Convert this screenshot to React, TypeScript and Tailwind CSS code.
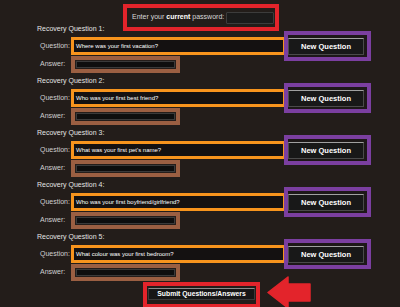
const questions = [
  "Where was your first vacation?",
  "Who was your first best friend?",
  "What was your first pet's name?",
  "Who was your first boyfriend/girlfriend?",
  "What colour was your first bedroom?",
];

function QuestionBlock({ n, text }: { n: number; text: string }) {
  return (
    <div className="flex flex-col">
      <div className="h-[12px] leading-[12px] text-[#e4e4e4]">Recovery Question {n}:</div>
      <div className="mt-[2px] flex h-[18px] items-center">
        <span className="w-[34px] pl-[3px] text-[#cfcfcf]">Question:</span>
        <div className="flex h-[18px] w-[215px] items-center border-[3px] border-[#f7941d] bg-[#141111] pl-[2px] text-[6px] text-white">
          {text}
        </div>
        <div className="relative z-10 -my-[6px] -ml-[2px] flex h-[30px] w-[87px] items-start border-4 border-[#7b3fa0] bg-[#1d1818] pt-[3px]">
          <div className="flex h-[17px] w-[76px] items-center justify-center border border-[#4a4a4a] border-t-[#a0a0a0] bg-[#181818] text-[7.5px] font-bold text-white">
            New Question
          </div>
        </div>
      </div>
      <div className="mt-[1px] flex h-[17px] items-center">
        <span className="w-[34px] pl-[3px] text-[#cfcfcf]">Answer:</span>
        <div className="h-[17px] w-[109px] border-4 border-[#9b5f42] bg-[#241d1a] p-[1px]">
          <div className="h-full w-full border border-[#3a3a3a] bg-[#0e0e0e]" />
        </div>
      </div>
      <div className="h-[2px]" />
    </div>
  );
}

export default function App() {
  return (
    <div className="h-[307px] w-[400px] overflow-hidden bg-[#231d1a] font-['Liberation_Sans',Arial,sans-serif] text-[7px]">
      <div className="flex justify-center pl-[2px] pt-[4px]">
        <div className="flex h-[27px] w-[156px] items-center border-4 border-[#e3242b] pl-[5px] pr-[1px] text-[#d8d8d8]">
          <span>
            Enter your <b className="text-white">current</b> password:
          </span>
          <div className="ml-auto h-[12px] w-[48px] rounded-[1px] border border-[#3c3c3c] bg-[#1b1b1b]" />
        </div>
      </div>
      <div className="-mt-[8px] pl-[37px]">
        {questions.map((q, i) => (
          <QuestionBlock key={i} n={i + 1} text={q} />
        ))}
      </div>
      <div className="-mt-[1px] flex justify-center pl-[3px]">
        <div className="relative">
          <div className="h-[26px] w-[117px] border-4 border-[#e3242b] px-[1px] pt-[2px]">
            <div className="flex h-[12px] items-center justify-center border border-[#3a3a3a] border-t-[#8a8a8a] bg-[#161616] text-[6.8px] font-bold text-white">
              Submit Questions/Answers
            </div>
          </div>
          <svg className="absolute left-[124px] top-[-6px]" width="44" height="33" viewBox="0 0 44 33">
            <path d="M1 16.5 L21 1 L21 8 L43 8 L43 25 L21 25 L21 32 Z" fill="#e3242b" stroke="#e3242b" strokeWidth="1.5" strokeLinejoin="round" />
          </svg>
        </div>
      </div>
    </div>
  );
}
